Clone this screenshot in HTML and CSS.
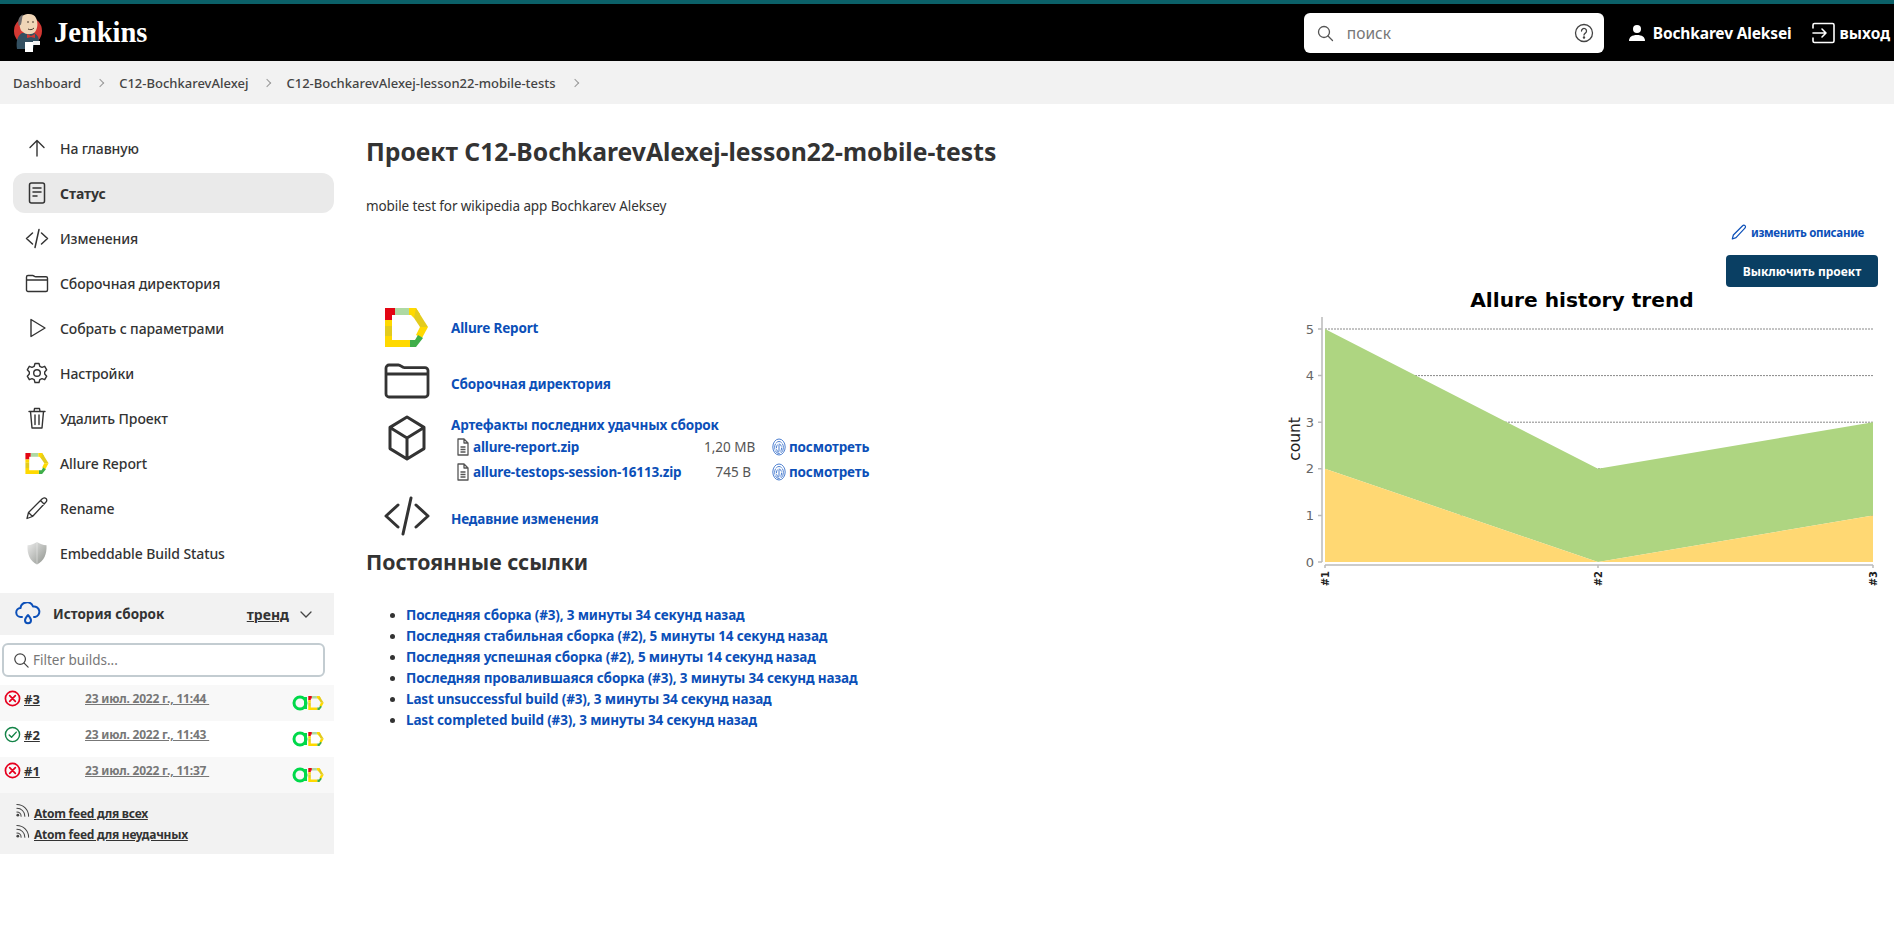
FILE: index.html
```html
<!DOCTYPE html>
<html lang="ru">
<head>
    <meta charset="UTF-8">
    <title>C12-BochkarevAlexej-lesson22-mobile-tests [Jenkins]</title>
    <link rel="stylesheet" href="styles.css">
</head>
<body>
    <svg class="defs" width="0" height="0">
        <symbol id="allure-d" viewBox="0 0 43 39">
            <path fill="#e30613" d="M0 0h10v7H7v5H0z"/>
            <path fill="#aed9a3" d="M10 0h14v7H10z"/>
            <path fill="#ffd900" d="M24 0h7l4 6-6 4-3-3h-2z"/>
            <path fill="#e3cb1d" d="M31 0l12 19h-8l-6-9z"/>
            <path fill="#ffd900" d="M35 19h8l-6 11-6-3z"/>
            <path fill="#3fae49" d="M25 32h5l3-5 5 3-7 9h-6z"/>
            <path fill="#ffd900" d="M0 39V28h7v4h18v7zM0 12h7v6H0z"/>
            <path fill="#e3cb1d" d="M0 18h7v10H0z"/>
        </symbol>
        <symbol id="allure-small" viewBox="0 0 32 16">
            <circle cx="8" cy="8" r="6" fill="none" stroke="#00d94a" stroke-width="3"/>
            <path d="M13.500 2v12" stroke="#00d94a" stroke-width="3"/>
            <use href="#allure-d" x="16" y="1" width="16" height="14"/>
        </symbol>
        <symbol id="print" viewBox="0 0 14 18">
            <g fill="none" stroke="#4d7fd1" stroke-width="1">
                <ellipse cx="7" cy="9" rx="6.200" ry="8"/>
                <ellipse cx="7" cy="9.500" rx="4.400" ry="6" stroke-dasharray="6 1"/>
                <ellipse cx="7" cy="10" rx="2.600" ry="4" stroke-dasharray="4 1"/>
                <path d="M7 7v6"/>
            </g>
        </symbol>
        <symbol id="file" viewBox="0 0 16 18">
            <path fill="none" stroke="#555" stroke-width="1.300" stroke-linejoin="round" d="M3 1h6l4 4v12H3zM9 1v4h4M5.500 9h5M5.500 11.500h5M5.500 14h5"/>
        </symbol>
        <symbol id="rss" viewBox="0 0 16 16">
            <g fill="none" stroke="#444" stroke-width="1.100" stroke-linecap="round">
                <path d="M2 1.500a12.500 12.500 0 0 1 12.500 12.500M2 5.500A8.500 8.500 0 0 1 10.500 14M2 9.500A4.500 4.500 0 0 1 6.500 14"/>
            </g>
            <circle cx="3" cy="13" r="1.500" fill="#444"/>
        </symbol>
        <symbol id="fail" viewBox="0 0 18 18">
            <circle cx="9" cy="9" r="7.500" fill="none" stroke="#e6001f" stroke-width="1.800"/>
            <path d="M6 6l6 6M12 6l-6 6" stroke="#e6001f" stroke-width="1.800" stroke-linecap="round"/>
        </symbol>
        <symbol id="folder" viewBox="0 0 24 24">
            <path fill="none" stroke="currentColor" stroke-width="1.400" stroke-linejoin="round" d="M1.500 6c0-.8.7-1.500 1.500-1.500h4.700c1.200 0 1.600 1.300 3 1.300H21c.8 0 1.500.7 1.500 1.500v11.700c0 .8-.7 1.500-1.500 1.500H3c-.8 0-1.500-.7-1.500-1.500zM1.500 9h21"/>
        </symbol>
        <symbol id="code" viewBox="0 0 24 24">
            <path fill="none" stroke="currentColor" stroke-width="1.500" stroke-linecap="round" stroke-linejoin="round" d="M7.500 7L1.500 12.500l6 5.500M16.500 7l6 5.500-6 5.500M14 3.500L10 21.500"/>
        </symbol>
    </svg>

    <header class="topbar">
        <a class="brand">
            <svg class="mascot" width="30" height="40" viewBox="0 0 30 40">
                <circle cx="15" cy="18" r="14" fill="#d33833"/>
                <path d="M4 36c-1-7 0-13 5-16h12c4 2 5 5 5 9l-5 3-1 4z" fill="#335061"/>
                <path d="M7 6c2-6 14-7 16-1 2 4 2 10-1 14-3 3-9 3-12 0-3-1-4-6-3-13z" fill="#f0d6b7"/>
                <path d="M6 13C4 8 6 3 10 1.500c-1 3-1 6-2 10z" fill="#6d6b6d"/>
                <path d="M14 21l4 2 4-2v4l-4-1-4 1z" fill="#d33833"/>
                <path d="M12 29h8v10h-8z" fill="#fff"/>
                <path d="M20 28h7v4h-7z" fill="#f2f2f2"/>
                <path d="M14 9h2M19 9h2M15 16c2 1 4 1 6-1" stroke="#49382c" stroke-width="1" fill="none"/>
            </svg>
            <span class="brand-name">Jenkins</span>
        </a>
        <div class="topbar-right">
            <div class="search-box">
                <svg width="18" height="18" viewBox="0 0 18 18" fill="none" stroke="#555" stroke-width="1.300"><circle cx="8" cy="8" r="5.500"/><path d="M12 12l4.500 4.500" stroke-linecap="round"/></svg>
                <span class="search-hint">поиск</span>
                <svg class="search-help" width="20" height="20" viewBox="0 0 20 20" fill="none" stroke="#444" stroke-width="1.300"><circle cx="10" cy="10" r="8.500"/><path d="M7.500 8a2.500 2.500 0 1 1 3.800 2.100c-.8.500-1.300 1-1.300 2" stroke-linecap="round"/><circle cx="10" cy="14.500" r=".6" fill="#444"/></svg>
            </div>
            <a class="user-link">
                <svg width="18" height="18" viewBox="0 0 18 18" fill="#fff"><circle cx="9" cy="5" r="4"/><path d="M1 17c0-4 3-6 8-6s8 2 8 6z"/></svg>
                Bochkarev Aleksei
            </a>
            <a class="logout-link">
                <svg width="23" height="22" viewBox="0 0 23 22" fill="none" stroke="#fff" stroke-width="1.600" stroke-linejoin="round" stroke-linecap="round"><path d="M1 6V3c0-1 .7-1.500 1.500-1.500h18c.8 0 1.500.5 1.500 1.500v16c0 1-.7 1.500-1.500 1.500h-18C1.700 20.500 1 20 1 19v-3M1 11h13M10 7l4 4-4 4"/></svg>
                выход
            </a>
        </div>
    </header>

    <nav class="breadcrumbs">
        <span>Dashboard</span><i class="crumb-sep"></i>
        <span>C12-BochkarevAlexej</span><i class="crumb-sep"></i>
        <span>C12-BochkarevAlexej-lesson22-mobile-tests</span><i class="crumb-sep"></i>
    </nav>

    <div class="page">
        <aside class="sidebar">
            <ul class="side-nav">
                <li class="side-item">
                    <svg viewBox="0 0 24 24" fill="none" stroke="currentColor" stroke-width="1.400" stroke-linecap="round" stroke-linejoin="round"><path d="M12 20V4.500M5 11.500l7-7 7 7"/></svg>
                    На главную
                </li>
                <li class="side-item active">
                    <svg viewBox="0 0 24 24" fill="none" stroke="currentColor" stroke-width="1.500" stroke-linecap="round" stroke-linejoin="round"><rect x="4.500" y="2" width="15" height="20" rx="2"/><path d="M8 7h8M8 11h8M8 15h4"/></svg>
                    Статус
                </li>
                <li class="side-item"><svg><use href="#code"/></svg>Изменения</li>
                <li class="side-item"><svg><use href="#folder"/></svg>Сборочная директория</li>
                <li class="side-item">
                    <svg viewBox="0 0 24 24" fill="none" stroke="currentColor" stroke-width="1.400" stroke-linejoin="round"><path d="M6 3.500l14 8.500-14 8.500z"/></svg>
                    Собрать с параметрами
                </li>
                <li class="side-item">
                    <svg viewBox="0 0 24 24" fill="none" stroke="currentColor" stroke-width="1.400" stroke-linejoin="round"><circle cx="12" cy="12" r="3.300"/><path d="M10 2.500h4l.8 2.800 2.200 1 2.700-1 2 3.500-2 2.100v2.200l2 2.100-2 3.500-2.700-1-2.200 1-.8 2.800h-4l-.8-2.800-2.200-1-2.700 1-2-3.500 2-2.100v-2.200l-2-2.100 2-3.500 2.700 1 2.200-1z"/></svg>
                    Настройки
                </li>
                <li class="side-item">
                    <svg viewBox="0 0 24 24" fill="none" stroke="currentColor" stroke-width="1.400" stroke-linecap="round" stroke-linejoin="round"><path d="M4 5.500h16M9 5.500l.5-3h5l.5 3M5.500 5.500L7 22h10l1.500-16.500M10 9v9.500M14 9v9.500"/></svg>
                    Удалить Проект
                </li>
                <li class="side-item"><svg class="allure-nav"><use href="#allure-d"/></svg>Allure Report</li>
                <li class="side-item">
                    <svg viewBox="0 0 24 24" fill="none" stroke="currentColor" stroke-width="1.300" stroke-linejoin="round"><path d="M2 22.500l1.500-6L17 3c1.500-1.500 3-1.500 4 -.5s1 2.500-.5 4L7.500 20.500zM3.500 16.500l4 4M15.500 4.500l4 4"/></svg>
                    Rename
                </li>
                <li class="side-item">
                    <svg viewBox="0 0 24 24"><defs><linearGradient id="shield" x1="0" y1="0" x2="1" y2="1"><stop offset="0" stop-color="#ececec"/><stop offset="1" stop-color="#8f938d"/></linearGradient></defs><path fill="url(#shield)" d="M12 1c3 2 6 3 9.500 3.200C22 13 19 20 12 23.500 5 20 2 13 2.500 4.200 6 4 9 3 12 1z"/><path d="M12 1v22.500" stroke="#fff" stroke-opacity=".4"/></svg>
                    Embeddable Build Status
                </li>
            </ul>

            <section class="history">
                <div class="history-head">
                    <svg width="26" height="24" viewBox="0 0 26 24" fill="none" stroke="#0b4fb8" stroke-width="2" stroke-linejoin="round" stroke-linecap="round"><path d="M7 15H6a4.500 4.500 0 0 1-.5-9A6.500 6.500 0 0 1 18 4.500 5 5 0 0 1 20 15h-1"/><path d="M13 13c2 2.500 3 3.700 3 5.200a3 3 0 0 1-6 0c0-1.500 1-2.700 3-5.200z"/></svg>
                    <span class="history-title">История сборок</span>
                    <a class="trend-link">тренд</a>
                    <svg class="trend-arrow" width="14" height="14" viewBox="0 0 14 14" fill="none" stroke="#444" stroke-width="1.300" stroke-linecap="round"><path d="M2 5l5 5 5-5"/></svg>
                </div>
                <div class="filter-wrap">
                    <div class="filter-box">
                        <svg width="16" height="16" viewBox="0 0 18 18" fill="none" stroke="#444" stroke-width="1.400"><circle cx="8" cy="8" r="6"/><path d="M12.500 12.500l4.500 4.500" stroke-linecap="round"/></svg>
                        Filter builds...
                    </div>
                </div>
                <div class="build-row">
                    <svg class="build-state"><use href="#fail"/></svg>
                    <a class="build-num">#3</a>
                    <a class="build-date">23 июл. 2022 г., 11:44&nbsp;</a>
                    <svg class="build-allure"><use href="#allure-small"/></svg>
                </div>
                <div class="build-row">
                    <svg class="build-state" viewBox="0 0 18 18"><circle cx="9" cy="9" r="7.500" fill="none" stroke="#138347" stroke-width="1.500"/><path d="M5.500 9.500l2.500 2.500 5-5.500" fill="none" stroke="#138347" stroke-width="1.500" stroke-linecap="round" stroke-linejoin="round"/></svg>
                    <a class="build-num">#2</a>
                    <a class="build-date">23 июл. 2022 г., 11:43&nbsp;</a>
                    <svg class="build-allure"><use href="#allure-small"/></svg>
                </div>
                <div class="build-row">
                    <svg class="build-state"><use href="#fail"/></svg>
                    <a class="build-num">#1</a>
                    <a class="build-date">23 июл. 2022 г., 11:37&nbsp;</a>
                    <svg class="build-allure"><use href="#allure-small"/></svg>
                </div>
                <div class="feeds">
                    <div class="feed"><svg><use href="#rss"/></svg><a>Atom feed для всех</a></div>
                    <div class="feed"><svg><use href="#rss"/></svg><a>Atom feed для неудачных</a></div>
                </div>
            </section>
        </aside>

        <main class="main">
            <h1 class="job-title">Проект C12-BochkarevAlexej-lesson22-mobile-tests</h1>
            <p class="job-desc">mobile test for wikipedia app Bochkarev Aleksey</p>
            <div class="edit-row">
                <a class="edit-link">
                    <svg width="16" height="16" viewBox="0 0 24 24" fill="none" stroke="#0b4fb8" stroke-width="1.800" stroke-linejoin="round"><path d="M2 22.500l1.500-6L17 3c1.500-1.500 3-1.500 4 -.5s1 2.500-.5 4L7.500 20.500z"/></svg>
                    изменить описание
                </a>
            </div>
            <div class="button-row"><button class="disable-btn">Выключить проект</button></div>

            <div class="columns">
                <div class="left-col">
                    <div class="task task-allure">
                        <svg class="task-icon allure-big"><use href="#allure-d"/></svg>
                        <a class="link">Allure Report</a>
                    </div>
                    <div class="task task-folder">
                        <svg class="task-icon"><use href="#folder"/></svg>
                        <a class="link">Сборочная директория</a>
                    </div>
                    <div class="task task-artifacts">
                        <svg class="task-icon" viewBox="0 0 24 24" fill="none" stroke="currentColor" stroke-width="1.500" stroke-linejoin="round"><path d="M12 1.500l8.500 5.200v10.600L12 22.500l-8.500-5.200V6.700zM3.500 6.700L12 12l8.500-5.300M12 12v10.500"/></svg>
                        <div class="artifacts">
                            <a class="link">Артефакты последних удачных сборок</a>
                            <div class="artifact">
                                <svg class="file-icon"><use href="#file"/></svg>
                                <a class="link artifact-name">allure-report.zip</a>
                                <span class="artifact-size">1,20 MB</span>
                                <svg class="print-icon"><use href="#print"/></svg>
                                <a class="link">посмотреть</a>
                            </div>
                            <div class="artifact">
                                <svg class="file-icon"><use href="#file"/></svg>
                                <a class="link artifact-name">allure-testops-session-16113.zip</a>
                                <span class="artifact-size">745 B</span>
                                <svg class="print-icon"><use href="#print"/></svg>
                                <a class="link">посмотреть</a>
                            </div>
                        </div>
                    </div>
                    <div class="task task-changes">
                        <svg class="task-icon"><use href="#code"/></svg>
                        <a class="link">Недавние изменения</a>
                    </div>

                    <h2 class="perma-title">Постоянные ссылки</h2>
                    <ul class="perma-list">
                        <li><a class="link">Последняя сборка (#3), 3 минуты 34 секунд назад</a></li>
                        <li><a class="link">Последняя стабильная сборка (#2), 5 минуты 14 секунд назад</a></li>
                        <li><a class="link">Последняя успешная сборка (#2), 5 минуты 14 секунд назад</a></li>
                        <li><a class="link">Последняя провалившаяся сборка (#3), 3 минуты 34 секунд назад</a></li>
                        <li><a class="link">Last unsuccessful build (#3), 3 минуты 34 секунд назад</a></li>
                        <li><a class="link">Last completed build (#3), 3 минуты 34 секунд назад</a></li>
                    </ul>
                </div>

                <div class="chart">
                    <svg width="614" height="320" viewBox="0 0 614 320">
                        <text class="chart-title" x="318" y="19" text-anchor="middle">Allure history trend</text>
                        <g class="grid">
                            <path d="M61 41H609M61 87.600H609M61 134.200H609"/>
                            <path class="grid-faint" d="M61 180.800H609M61 227.400H609"/>
                        </g>
                        <polygon points="61,41 334,180.800 609,134.200 609,227.400 334,274 61,180.800" fill="#aed581"/>
                        <polygon points="61,180.800 334,274 609,227.400 609,274 61,274" fill="#ffd873"/>
                        <path class="axis" d="M58 29V274M54 41h4M54 87.600h4M54 134.200h4M54 180.800h4M54 227.400h4M54 274h4M61 277H609M61 277v3M334 277v3M609 277v3"/>
                        <g class="tick-y" text-anchor="end">
                            <text x="50" y="46">5</text>
                            <text x="50" y="92">4</text>
                            <text x="50" y="139">3</text>
                            <text x="50" y="185">2</text>
                            <text x="50" y="232">1</text>
                            <text x="50" y="279">0</text>
                        </g>
                        <text class="axis-label" transform="translate(36 151) rotate(-90)" text-anchor="middle">count</text>
                        <g class="tick-x" text-anchor="end">
                            <text transform="translate(65 283) rotate(-90)">#1</text>
                            <text transform="translate(338 283) rotate(-90)">#2</text>
                            <text transform="translate(613 283) rotate(-90)">#3</text>
                        </g>
                    </svg>
                </div>
            </div>
        </main>
    </div>
</body>
</html>
```

FILE: styles.css
```css
* {
    box-sizing: border-box;
}
body {
    margin: 0;
    font-family: "Noto Sans", "Open Sans", sans-serif;
    font-size: 14px;
    color: #333;
    background: #fff;
    overflow: hidden;
}
a {
    color: inherit;
    text-decoration: none;
}
ul {
    margin: 0;
    padding: 0;
}
.defs {
    position: absolute;
}

/* top bar */
.topbar {
    height: 61px;
    background: #000;
    border-top: 4px solid #0b6068;
    display: flex;
    justify-content: space-between;
    align-items: center;
    padding: 0 4px 0 13px;
}
.brand {
    display: flex;
    align-items: center;
    gap: 11px;
}
.mascot {
    flex: none;
}
.brand-name {
    font-family: "Liberation Serif", serif;
    font-weight: 700;
    font-size: 28.500px;
    color: #fff;
}
.topbar-right {
    display: flex;
    align-items: center;
    color: #fff;
    font-weight: 700;
    font-size: 15.500px;
}
.search-box {
    width: 300px;
    height: 40px;
    background: #fff;
    border-radius: 6px;
    display: flex;
    align-items: center;
    padding: 0 10px 0 12px;
    margin-right: 24px;
    color: #777;
    font-weight: 400;
}
.search-hint {
    margin-left: 13px;
    flex: 1;
}
.user-link,
.logout-link {
    display: flex;
    align-items: center;
    gap: 7px;
    white-space: nowrap;
}
.user-link {
    letter-spacing: -0.15px;
}
.logout-link {
    margin-left: 20px;
    gap: 5px;
}

/* breadcrumbs */
.breadcrumbs {
    height: 43px;
    background: #f2f2f2;
    display: flex;
    align-items: center;
    padding-left: 13px;
    font-size: 13px;
    font-weight: 500;
    color: #444;
}
.crumb-sep {
    width: 6px;
    height: 6px;
    border-top: 1px solid #999;
    border-right: 1px solid #999;
    transform: rotate(45deg);
    margin: 0 16px 0 16px;
}

/* side panel */
.page {
    display: flex;
}
.sidebar {
    width: 334px;
    flex: none;
    padding-top: 24px;
}
.side-nav {
    list-style: none;
    padding-left: 13px;
}
.side-item {
    height: 40px;
    margin-bottom: 5px;
    display: flex;
    align-items: center;
    gap: 11px;
    padding-left: 12px;
    border-radius: 12px;
    font-weight: 500;
    letter-spacing: -0.1px;
}
.side-item svg {
    width: 24px;
    height: 24px;
    flex: none;
}
.side-item .allure-nav {
    height: 21px;
}
.side-item.active {
    background: #eaeaea;
    font-weight: 700;
}

/* build history */
.history {
    margin-top: 20px;
}
.history-head {
    height: 42px;
    background: #f2f2f2;
    display: flex;
    align-items: center;
    padding: 0 21px 0 15px;
}
.history-title {
    margin-left: 12px;
    font-weight: 700;
    font-size: 13.500px;
    flex: 1;
}
.trend-link {
    font-weight: 700;
    text-decoration: underline;
    margin-right: 10px;
}
.filter-wrap {
    padding: 8px 9px 8px 2px;
}
.filter-box {
    height: 34px;
    border: 2px solid #c3ccd1;
    border-radius: 6px;
    display: flex;
    align-items: center;
    gap: 4px;
    padding-left: 9px;
    color: #777;
    font-size: 13.500px;
}
.build-row {
    height: 36px;
    display: flex;
    padding: 5px 10px 0 4px;
    font-size: 13px;
    font-weight: 700;
}
.build-row:nth-of-type(odd) {
    background: #f8f8f8;
}
.build-row:nth-of-type(even) {
    background: #fff;
}
.build-row a {
    text-decoration: underline;
}
.build-state {
    width: 17px;
    height: 17px;
    flex: none;
}
.build-num {
    margin-left: 3px;
    width: 61px;
}
.build-date {
    color: #777;
    font-size: 12px;
    letter-spacing: -0.2px;
    flex: 1;
}
.build-allure {
    width: 32px;
    height: 16px;
    margin-top: 5px;
}
.feeds {
    background: #f2f2f2;
    height: 61px;
    padding: 10px 0 0 15px;
}
.feed {
    display: flex;
    height: 21px;
    font-size: 12px;
    letter-spacing: -0.25px;
    font-weight: 700;
}
.feed svg {
    width: 15px;
    height: 15px;
    margin-right: 4px;
}
.feed a {
    text-decoration: underline;
    margin-top: 2px;
}

/* main panel */
.main {
    flex: 1;
    padding: 25px 16px 0 32px;
    min-width: 0;
}
.job-title {
    margin: 0;
    font-size: 24.700px;
    line-height: 46px;
    font-weight: 700;
}
.job-desc {
    margin: 21px 0 0;
    line-height: 20px;
    font-size: 13.500px;
    letter-spacing: -0.1px;
}
.edit-row {
    display: flex;
    justify-content: flex-end;
    margin-top: 8px;
    padding-right: 14px;
}
.edit-link {
    display: flex;
    align-items: center;
    gap: 4px;
    color: #0b4fb8;
    font-size: 11.500px;
    letter-spacing: -0.3px;
    font-weight: 700;
}
.button-row {
    display: flex;
    justify-content: flex-end;
    margin-top: 15px;
}
.disable-btn {
    width: 152px;
    height: 32px;
    border: 0;
    border-radius: 4px;
    background: #0a3f63;
    color: #fff;
    font: 700 12px "Noto Sans", sans-serif;
}
.columns {
    display: flex;
    justify-content: space-between;
    margin-top: 1px;
}
.link {
    color: #0b4fb8;
    font-weight: 700;
    font-size: 13.500px;
    letter-spacing: -0.15px;
}

/* tasks */
.task {
    display: flex;
    align-items: center;
    padding-left: 17px;
}
.task-icon {
    width: 48px;
    height: 48px;
    flex: none;
    margin-right: 20px;
    color: #333;
}
.allure-big {
    width: 43px;
    height: 39px;
    margin-right: 23px;
    margin-left: 2px;
}
.task-allure {
    margin-top: 20px;
    height: 39px;
}
.task-folder {
    margin-top: 9px;
    height: 48px;
}
.task-folder .link,
.task-changes .link {
    margin-top: 8px;
}
.task-artifacts {
    align-items: flex-start;
    margin-top: 10px;
}
.artifacts {
    padding-top: 1px;
}
.artifact {
    display: flex;
    align-items: center;
    height: 25px;
    padding-left: 4px;
}
.file-icon {
    width: 16px;
    height: 18px;
    margin-right: 2px;
}
.artifact-name {
    width: 231px;
}
.artifact-size {
    width: 47px;
    text-align: right;
    color: #555;
    white-space: nowrap;
    font-size: 13.500px;
}
.print-icon {
    width: 14px;
    height: 18px;
    margin: 0 3px 0 21px;
}
.task-changes {
    margin-top: 7px;
}

/* permalinks */
.perma-title {
    margin: 8px 0 0;
    font-size: 21.300px;
    line-height: 30px;
    font-weight: 700;
}
.perma-list {
    margin-top: 28px;
    padding-left: 40px;
    font-size: 13.500px;
    line-height: 21px;
}

/* trend chart */
.chart {
    width: 614px;
    flex: none;
}
.chart svg {
    display: block;
    overflow: visible;
}
.chart-title {
    font: 700 20.200px "DejaVu Sans", sans-serif;
    fill: #000;
}
.grid path {
    fill: none;
    stroke: #888;
    stroke-dasharray: 2 1;
}
.axis {
    fill: none;
    stroke: #bbb;
    stroke-width: 1.500;
}
.tick-y text {
    font: 13px "DejaVu Sans", sans-serif;
    fill: #666;
}
.axis-label {
    font: 15.500px "DejaVu Sans", sans-serif;
    fill: #222;
}
.tick-x text {
    font: 700 10px "DejaVu Sans", sans-serif;
    fill: #222;
}
```
